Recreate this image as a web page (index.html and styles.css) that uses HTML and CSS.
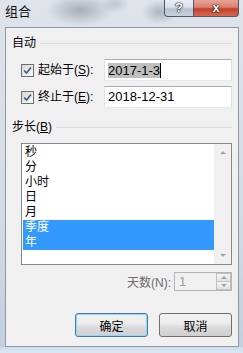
FILE: index.html
```html
<!DOCTYPE html>
<html>
<head>
    <title>组合</title>
    <link rel="stylesheet" href="styles.css">
</head>
<body>
    <div class="window">
        <div class="titlebar">
            <span class="title">组合</span>
            <div class="caption-btns">
                <div class="cap-btn help">?</div>
                <div class="cap-btn close">x</div>
            </div>
        </div>
        <div class="client">
            <div class="group-head"><span>自动</span><div class="rule"></div></div>

            <div class="field-row first">
                <div class="checkbox">
                    <svg width="9" height="9" viewBox="0 0 9 9"><path d="M1 4.5 L3.5 7 L8 1.5" fill="none" stroke="#3d5a86" stroke-width="1.6"/></svg>
                </div>
                <label>起始于(<u>S</u>):</label>
                <div class="textbox"><span class="sel">2017-1-3</span><span class="caret"></span></div>
            </div>
            <div class="field-row">
                <div class="checkbox">
                    <svg width="9" height="9" viewBox="0 0 9 9"><path d="M1 4.5 L3.5 7 L8 1.5" fill="none" stroke="#3d5a86" stroke-width="1.6"/></svg>
                </div>
                <label>终止于(<u>E</u>):</label>
                <div class="textbox">2018-12-31</div>
            </div>

            <div class="group-head second"><span>步长(<u>B</u>)</span><div class="rule"></div></div>

            <div class="listbox">
                <div class="items">
                    <div class="item">秒</div>
                    <div class="item">分</div>
                    <div class="item">小时</div>
                    <div class="item">日</div>
                    <div class="item">月</div>
                    <div class="item selected">季度</div>
                    <div class="item selected">年</div>
                </div>
                <div class="scrollbar">
                    <div class="arrow up"></div>
                    <div class="arrow down"></div>
                </div>
            </div>

            <div class="spin-row">
                <span class="spin-label">天数(N):</span>
                <div class="spinbox">
                    <div class="spin-value">1</div>
                    <div class="spin-btns">
                        <div class="spin-btn"><div class="arrow up"></div></div>
                        <div class="spin-btn"><div class="arrow down"></div></div>
                    </div>
                </div>
            </div>

            <div class="button-row">
                <button class="btn default">确定</button>
                <button class="btn">取消</button>
            </div>
        </div>
        <div class="bottom-frame"></div>
    </div>
</body>
</html>
```

FILE: styles.css
```css
body {
    margin: 0;
    padding: 0;
    font-family: "Liberation Sans", "Noto Sans CJK SC", sans-serif;
    font-size: 12px;
    color: #000;
}

.window {
    width: 243px;
    height: 353px;
    display: flex;
    flex-direction: column;
    background:
        radial-gradient(ellipse 34px 16px at 80px 10px, rgba(110, 122, 136, 0.5), transparent),
        radial-gradient(ellipse 18px 12px at 160px 12px, rgba(110, 122, 136, 0.45), transparent),
        radial-gradient(ellipse 14px 10px at 115px 4px, rgba(140, 150, 162, 0.4), transparent),
        linear-gradient(180deg, #dfe4ea 0%, #d3dbe4 60%, #c2cfdc 100%);
    overflow: hidden;
}

.titlebar {
    height: 27px;
    display: flex;
    justify-content: space-between;
    align-items: flex-start;
}

.title {
    padding: 4px 0 0 5px;
    font-size: 13px;
    line-height: 16px;
    color: #111;
}

.caption-btns {
    display: flex;
    margin-right: 4px;
}

.cap-btn {
    height: 17px;
    box-sizing: border-box;
    border: 1px solid #4e5a68;
    border-top: none;
    text-align: center;
    font-weight: bold;
    color: #fff;
    font-size: 13px;
    line-height: 16px;
    text-shadow: 0 0 1px #000, 0 0 1px #000, 0 0 2px #333;
}

.help {
    width: 29px;
    border-radius: 0 0 0 4px;
    border-right: none;
    background: linear-gradient(180deg, #e9edf1 0%, #dce2e8 45%, #b7c2cd 55%, #c9d2dc 100%);
}

.close {
    width: 46px;
    border-radius: 0 0 4px 0;
    background: linear-gradient(180deg, #e7a597 0%, #d88170 45%, #c5402b 55%, #d4694f 100%);
}

.client {
    height: 320px;
    margin: 0 4px 0 5px;
    box-sizing: border-box;
    border: 1px solid #8d99a6;
    background: #f0f0f0;
    padding: 7px 6px 0 6px;
    display: flex;
    flex-direction: column;
}

.group-head {
    display: flex;
    align-items: center;
    height: 16px;
    line-height: 16px;
}

.group-head.second {
    margin-top: 11px;
}

.group-head .rule {
    flex: 1;
    margin-left: 4px;
    border-top: 1px solid #d5dfe5;
}

.field-row {
    display: flex;
    align-items: center;
    height: 22px;
    padding-left: 9px;
    margin-top: 5px;
}

.field-row.first {
    margin-top: 8px;
}

.checkbox {
    width: 13px;
    height: 13px;
    box-sizing: border-box;
    border: 1px solid #707070;
    background: linear-gradient(135deg, #d6d6d6, #fbfbfb);
    display: flex;
    align-items: center;
    justify-content: center;
    margin-right: 4px;
}

.checkbox svg {
    display: block;
}

label {
    line-height: 16px;
}

.textbox {
    margin-left: auto;
    width: 128px;
    height: 22px;
    box-sizing: border-box;
    border: 1px solid #abadb3;
    border-color: #abadb3 #dbdfe6 #e3e9ef #e2e3ea;
    background: #fff;
    font-size: 13px;
    line-height: 20px;
    padding-left: 3px;
    display: flex;
    align-items: center;
}

.sel {
    background: #bfbfbf;
    line-height: 15px;
}

.caret {
    width: 1px;
    height: 15px;
    background: #000;
}

.listbox {
    margin: 8px 0 0 9px;
    height: 122px;
    box-sizing: border-box;
    border: 1px solid #828790;
    background: #fff;
    display: flex;
}

.items {
    flex: 1;
    padding: 1px 0 0 1px;
}

.item {
    height: 15px;
    line-height: 15px;
    padding-left: 2px;
}

.item.selected {
    background: #3399ff;
    color: #fff;
}

.scrollbar {
    width: 17px;
    background: #f0f0f0;
    display: flex;
    flex-direction: column;
    justify-content: space-between;
    align-items: center;
    padding: 7px 0;
}

.arrow {
    width: 0;
    height: 0;
    border-left: 3px solid transparent;
    border-right: 3px solid transparent;
}

.arrow.up {
    border-bottom: 3px solid #a3a3a3;
}

.arrow.down {
    border-top: 3px solid #a3a3a3;
}

.spin-row {
    margin-top: 7px;
    display: flex;
    justify-content: flex-end;
    align-items: center;
    height: 19px;
}

.spin-label {
    color: #6d6d6d;
    margin-right: 3px;
}

.spinbox {
    width: 58px;
    height: 19px;
    box-sizing: border-box;
    border: 1px solid #b5b5b5;
    background: #f0f0f0;
    display: flex;
}

.spin-value {
    flex: 1;
    color: #a0a0a0;
    font-size: 13px;
    line-height: 17px;
    padding-left: 4px;
}

.spin-btns {
    width: 15px;
    display: flex;
    flex-direction: column;
}

.spin-btn {
    flex: 1;
    border: 1px solid #c0c0c0;
    margin-top: -1px;
    background: linear-gradient(180deg, #f4f4f4, #e2e2e2);
    display: flex;
    align-items: center;
    justify-content: center;
}

.spin-btn:first-child {
    margin-top: 0;
}

.button-row {
    margin-top: 22px;
    display: flex;
    justify-content: flex-end;
    gap: 11px;
}

.btn {
    width: 73px;
    height: 24px;
    margin: 0;
    padding: 0;
    box-sizing: border-box;
    border: 1px solid #707070;
    border-radius: 3px;
    background: linear-gradient(180deg, #f2f2f2 0%, #ebebeb 45%, #dddddd 55%, #cfcfcf 100%);
    font-family: "Liberation Sans", "Noto Sans CJK SC", sans-serif;
    font-size: 12px;
    color: #000;
}

.btn.default {
    border-color: #3c7fb1;
    box-shadow: inset 0 0 0 1px #9bd4f2;
}

.bottom-frame {
    flex: 1;
    background: linear-gradient(180deg, #cddcea, #dbe7f2);
}
```
